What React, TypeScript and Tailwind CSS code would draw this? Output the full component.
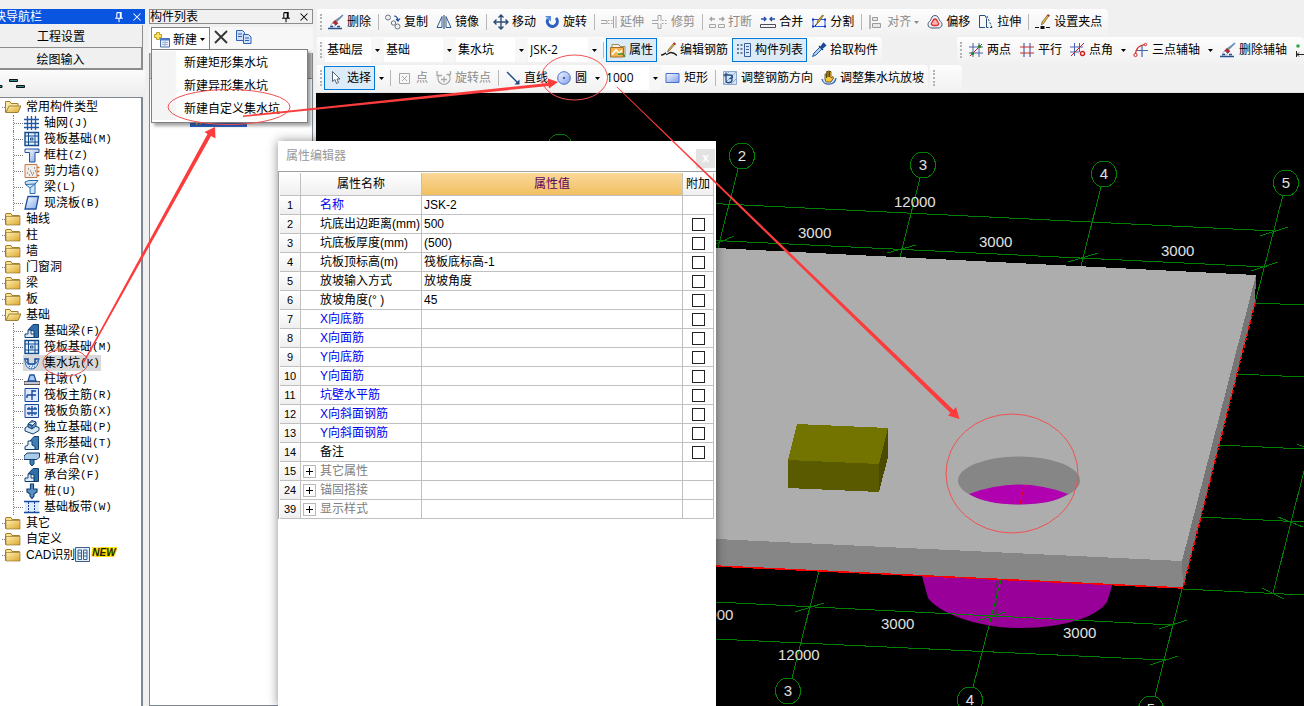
import React from 'react';

const ICONS: Record<string, React.ReactNode> = {
  brush: (
    <>
      <path d="M14.5 1.5 8 8.5l-1.5-1.5z" fill="#f0d9a0" stroke="#8a6a20" strokeWidth="0.8" />
      <path d="m15 1-6.5 6" stroke="#5b8fd0" strokeWidth="1.6" />
      <path d="M4.5 9 7 6.5l2.8 2.8L7 12z" fill="#c02535" stroke="#5a1a3a" strokeWidth="0.7" />
      <path d="M3 10.500 5 9l2.500 2.500L5.500 13z" fill="#fff" stroke="#8899b0" strokeWidth="0.7" />
      <path d="M0 14.500h14M2 12.500h3M9 12.500h3" stroke="#26538f" strokeWidth="1.6" />
    </>
  ),
  copyObj: (
    <g fill="#f3f3f3" stroke="#6c7684">
      <circle cx="3" cy="3.500" r="2.500" />
      <circle cx="8.500" cy="9" r="2.200" />
      <circle cx="12.500" cy="12.500" r="2.500" />
      <path d="M9 2c2 0 3.500 1 4 4m-2-1 2 2 2-2.500" fill="none" stroke="#1f4fa0" strokeWidth="1.200" />
    </g>
  ),
  mirror: (
    <g fill="none" stroke="#2a5a9a">
      <path d="M6 2.500v11H1zM10 2.500v11h5z" />
      <path d="M8 1v14" stroke="#30343c" />
    </g>
  ),
  move: (
    <path d="M8 1v14M1 8h14M5.500 3.500 8 1l2.500 2.500M5.500 12.500 8 15l2.500-2.500M3.500 5.500 1 8l2.500 2.500M12.500 5.500 15 8l-2.500 2.500" fill="none" stroke="#2b4d78" strokeWidth="1.400" />
  ),
  rotate: (
    <>
      <path d="M12 4a5 5 0 1 1-8 1" fill="none" stroke="#2b5fc0" strokeWidth="3" />
      <path d="M1 2h6v5.500z" fill="#5b8be0" />
    </>
  ),
  extend: (
    <g fill="none" stroke="#a4a4a4">
      <path d="M0 6.500h6v3H0M12.500 2v12M15 2v12" />
      <path d="M7 6.500h5M7 9.500h5" strokeDasharray="1.500 1.500" />
    </g>
  ),
  trim: (
    <g fill="none" stroke="#a4a4a4">
      <path d="M0 6.500h6v-5h3v5M0 9.500h6v5h3v-5" />
      <path d="M10 6.500h5M10 9.500h5" strokeDasharray="1.500 1.500" />
    </g>
  ),
  break: (
    <g fill="none" stroke="#a4a4a4">
      <path d="M.5 10.500h6v3h-6zM9.500 10.500h6v3h-6z" />
      <path d="M1 5h5M3 3 1 5l2 2M15 5h-5M13 3l2 2-2 2" strokeWidth="1.300" />
    </g>
  ),
  merge: (
    <g fill="none" stroke="#4a5058">
      <path d="M.5 10.500h15v3H.5z" />
      <path d="M1 5h5M4 3l2 2-2 2M15 5h-5M12 3l-2 2 2 2" stroke="#1f4fa8" strokeWidth="1.400" />
    </g>
  ),
  split: (
    <>
      <path d="M2 5.500h12v7H2z" fill="none" stroke="#2458d8" />
      <path d="M1 4.500h2v2H1zM13 4.500h2v2h-2zM1 11.500h2v2H1zM13 11.500h2v2h-2z" fill="#1038c8" />
      <path d="M12.500 1.500 8 8l-2 1.500.5-2.500 5-6z" fill="#e8b83c" stroke="#604818" strokeWidth="0.7" />
      <path d="M6 9.500 4 12" stroke="#111" />
    </>
  ),
  align: (
    <g fill="#e6e6e6" stroke="#9c9c9c">
      <path d="M2 1v14" strokeWidth="1.400" />
      <path d="M4.500 3.500h5v3h-5zM4.500 9.500h8v4h-8z" />
    </g>
  ),
  offset: (
    <g fill="none">
      <path d="M8 1.500c3 0 3.500 2.500 4.500 5 1.500 1 2.500 2.500 2.500 4 0 2.500-2 3.500-4 3.500H5c-2 0-4-1-4-3.500 0-1.500 1-3 2.500-4C4.500 4 5 1.500 8 1.500z" stroke="#3f5876" fill="#eef2f7" />
      <path d="M8 5c2 0 2 2 3 3.500 1.500 1 .5 3-1.500 3h-3c-2 0-3-2-1.500-3C6 7 6 5 8 5z" stroke="#e03030" strokeWidth="1.300" fill="#f7b5b5" />
    </g>
  ),
  stretch: (
    <g fill="none" stroke="#23507f">
      <path d="M7 13.500H1.500v-12H7l1.500 3v9" />
      <path d="M9 2l5 11.500M5 13.500h10" strokeDasharray="2 1.500" />
    </g>
  ),
  grips: (
    <>
      <path d="M0 13.500h4M11 13.500h4" stroke="#111" strokeWidth="1.200" />
      <path d="M5.500 12h4v3h-4z" fill="#111" />
      <path d="M14 1.500 9 9l-2.500 2L7 8l5.500-7z" fill="#e6bd52" stroke="#6a5018" strokeWidth="0.7" />
      <path d="m12.500 1 2 1" stroke="#b02c2c" strokeWidth="1.600" />
    </>
  ),
  property: (
    <>
      <path d="M2 2.500h7l1 2h5v9H2z" fill="#f5f0e0" stroke="#9c8a60" />
      <path d="M.5 5.500h13v9.500H.5z" fill="#f6b552" stroke="#a0702a" />
      <path d="M2 12.500 6 8l3 3 3-2.500" fill="none" stroke="#fff" strokeWidth="1.600" />
      <path d="M8 12h5l2 3" stroke="#4a8a2a" fill="none" strokeWidth="1.400" />
    </>
  ),
  editBar: (
    <>
      <path d="M0 13c3 0 4-2 5-2M5 12.500c2 0 3-2 5-2 3 0 4 1 6 3" fill="none" stroke="#202020" strokeWidth="1.400" />
      <path d="M14 2 9 8 6.500 10 7.500 7.500l5-6z" fill="#e6bd52" stroke="#6a4a18" strokeWidth="0.7" />
      <path d="m12.500 1 2 1.500" stroke="#b02c2c" strokeWidth="1.800" />
    </>
  ),
  list: (
    <>
      <path d="M1 2h2v2H1zM1 6h2v2H1zM1 10h2v2H1zM4.500 2h2v2h-2zM4.500 6h2v2h-2zM4.500 10h2v2h-2z" fill="#6d7f98" />
      <path d="M8.500 1.500h6v13h-6z" fill="#dce8fb" stroke="#3a5f9c" />
      <path d="M10 4.500h3M10 7.500h3M10 10.500h3" stroke="#3a5f9c" />
    </>
  ),
  picker: (
    <>
      <path d="M9 5 3 11l-1.500 3.500L5 13l6-6z" fill="#a9d0f5" stroke="#2a5c9a" />
      <path d="M8 4l4 4M10 5l2.500-3.500 2 2L11 6.500z" fill="#1c4c92" stroke="#1c4c92" strokeWidth="1.500" />
    </>
  ),
  cursor: <path d="M4.500 1.500v10l2.500-2 1.500 4 2-1-1.500-3.500h3z" fill="#fff" stroke="#44546a" strokeWidth="0.9" />,
  point: (
    <g fill="none" stroke="#a8a8a8">
      <path d="M2.500 3.500h10v10h-10z" />
      <path d="m5 6 5 5M10 6l-5 5" />
    </g>
  ),
  rotatePoint: (
    <g fill="none" stroke="#a8a8a8" strokeWidth="1.300">
      <path d="M3 5a6 6 0 1 0 10 0M1 1v4.500h5M5 9.500h6M8 6.500v6M10.500 4.500h4V1" />
    </g>
  ),
  line: (
    <>
      <path d="m2 2 11 11" stroke="#1a4a86" strokeWidth="1.300" />
      <path d="M14.500 14.500H9.500L14.500 9.500z" fill="#1a4a86" />
    </>
  ),
  circle: (
    <>
      <circle cx="8" cy="8" r="6.300" fill="url(#ball)" stroke="#4a6ecc" />
      <circle cx="8" cy="8" r="1" fill="#24408c" />
    </>
  ),
  rect: <path d="M1 3.500h13v9H1z" fill="url(#ball)" stroke="#4a6ecc" />,
  barDir: (
    <g fill="none" stroke="#234a80">
      <path d="M1.500 1.500h13v13h-13z" fill="#d5e4f6" stroke="#8fa9cc" />
      <path d="m2 14 12-12M9 14l5-5M2 7l5-5" stroke="#8fa9cc" />
      <path d="M4 2.500v8c0 3 5 3 6 0V6M1.500 5h6c4 0 4 3.500 0 3.500" strokeWidth="1.300" />
    </g>
  ),
  slope: (
    <>
      <path d="M1 9c1 7 13 7 14-1" fill="#cfe3fa" stroke="#2f66b4" strokeWidth="1.300" />
      <path d="M4 9V4h1.500v4V1.500H7V7 1h1.500v6V1.500H10V8l2-1.500.5 1.500L10 12H5z" fill="#f7c63c" stroke="#5a430c" strokeWidth="0.800" />
    </>
  ),
  twoPoint: (
    <>
      <path d="M5 1v14M11 1v14M1 5h14M1 11h14" stroke="#4a62b0" />
      <path d="M2 14 14 2" stroke="#c02020" />
      <circle cx="4.500" cy="11.500" r="1.700" fill="#2c8a2c" />
      <circle cx="11.500" cy="4.500" r="1.700" fill="#2c8a2c" />
    </>
  ),
  parallel: (
    <>
      <path d="M5 1v14M11 1v14" stroke="#4a62b0" strokeWidth="1.200" />
      <path d="M1 5h14M1 11h14" stroke="#c83030" strokeWidth="1.200" />
    </>
  ),
  angle: (
    <>
      <path d="M4.500 1v13M9.500 1v9M0 5h13M0 10h9" stroke="#4a62b0" />
      <path d="M1 14 14 1" stroke="#c02020" />
      <circle cx="12.500" cy="11.500" r="2" fill="none" stroke="#d02020" strokeWidth="1.400" />
    </>
  ),
  threePoint: (
    <>
      <path d="M9 4v11M4 8.500h11" stroke="#3f66b4" strokeWidth="1.200" />
      <path d="M2.500 13C2.500 6 6 3 13 2.500" fill="none" stroke="#d02828" strokeWidth="1.200" />
      <circle cx="2.500" cy="13" r="1.600" fill="#fff" stroke="#d02828" />
      <circle cx="12.500" cy="2.500" r="1.200" fill="#fff" stroke="#d02828" />
    </>
  ),
  dimension: (
    <>
      <path d="M1.500 9v6M1.500 12.500H16M4 10.500l-2 2 2 2" stroke="#222" fill="none" />
      <circle cx="3" cy="4" r="1.800" fill="#2fa84a" />
    </>
  ),
  create: (
    <>
      <path d="M6.500 6.500h9v8.500h-9z" fill="#eef4fd" stroke="#4a6ea8" />
      <path d="M6.500 6.500h9v2h-9z" fill="#4a7bd0" />
      <path d="M8 10.500h6M8 12.500h6M11 9v5.500" stroke="#9ab4dc" />
      <path d="M2.500.5h3v2h2v3h-2v2h-3v-2h-2v-3h2z" fill="#ffe45a" stroke="#a88a10" strokeWidth="0.800" />
    </>
  ),
  remove: <path d="m2 2 12 12M14 2 2 14" stroke="#333" strokeWidth="1.800" />,
  copy: (
    <g fill="#cfe0fa" stroke="#2f5fb0">
      <path d="M.5 1.500h6l2 2v8h-8z" />
      <path d="M7.500 5.500h5l2.500 2.500v6.500H7.500z" />
      <path d="M2 5h4M2 7.500h4M9 9h4M9 11.500h4" />
    </g>
  ),
  folder: (
    <>
      <path d="M.5 3V13.500h14V4.500H7L6 2.500H1z" fill="#f9e08a" stroke="#a08030" />
      <path d="M1 5.500h14v8.500H1z" fill="url(#gold)" stroke="#8a6a20" strokeWidth="0.600" />
    </>
  ),
  folderOpen: (
    <>
      <path d="M.5 13.500v-11H5l1 2h7v3" fill="#fbe7a0" stroke="#a08030" />
      <path d="M1 13.500 4 7h12l-3 6.500z" fill="url(#gold)" stroke="#8a6a20" strokeWidth="0.800" />
    </>
  ),
  axis: <path d="M3.500 1v14M7.500 1v14M11.500 1v14M0 4.500h15M0 8.500h15M0 12.500h15" stroke="#1f58a8" strokeWidth="1.300" />,
  raft: (
    <g fill="none" stroke="#124a8c">
      <path d="M1 1.500h13.500v13H1z" fill="#e8f1fb" strokeWidth="1.400" />
      <path d="M4.500 2v12M11 2v12M1 5h13M1 11h13M6.500 7h2.500v2H6.500z" />
    </g>
  ),
  column: <path d="M1 2h14v3.500h-4V15H5.500V5.500H1z" fill="url(#steel)" stroke="#1f4fa0" />,
  wall: (
    <>
      <path d="M1 1.500h12v13H1z" fill="#f1ece8" stroke="#c87a48" />
      <path d="M3 10h1M6 8h1M9 10h1M5 12h1M8 12h1M11 8h1M4 6h1M10 5h1M7 10h1" stroke="#555" />
      <path d="M13 4.500h2.500M13 8.500h2.500M13 12.500h2.500" stroke="#d86a18" strokeWidth="1.300" />
    </>
  ),
  beam: <path d="M1 3l4-1.500h9L11 5v9.500H6V9L1.500 5.500zM6 9l6-5M1.500 5.500 11 5" fill="#cfe4f8" stroke="#2b70b0" />,
  slab: <path d="M4 1.500h10.500L12 14H1z" fill="url(#steel)" stroke="#1f4fa0" strokeWidth="1.300" />,
  footBeam: (
    <>
      <path d="M4 7 9 1.500h5.500v13H10V8z" fill="#2f6ea8" stroke="#123f70" />
      <path d="M1 14.500V11h3V7h3v4h3v3.500z" fill="#dfecf8" stroke="#123f70" />
    </>
  ),
  pit: (
    <>
      <path d="M0 4h4v5h7V4h4.500" fill="none" stroke="#124a9c" strokeWidth="1.500" />
      <path d="M1 5c0 12 13 12 13.500 0L11 9.500H4z" fill="#d8e8fa" stroke="#2f66b4" />
      <path d="M5 11.500h1M8 11h1M10 12h1M7 13h1" stroke="#124a9c" />
    </>
  ),
  pier: (
    <>
      <path d="M0 10.500h16v3H0z" fill="#c4c8ce" stroke="#555" />
      <path d="M4 10 6 4h4l2 6z" fill="#a9c9f5" stroke="#1f4fa0" strokeWidth="1.300" />
    </>
  ),
  mainBar: (
    <g fill="none" stroke="#1648a0">
      <path d="M1 1.500h13.500v13H1z" fill="#dfeaff" />
      <path d="M8 3v10M3 8h9M8 4h4M3 8v3" strokeWidth="1.400" />
    </g>
  ),
  negBar: (
    <g fill="none" stroke="#1648a0">
      <path d="M1 1.500h13.500v13H1z" fill="#dfeaff" />
      <path d="M8 3v10M3 6h10M3 10h10M5 6v-2M11 6v-2M5 12v-2M11 12v-2" strokeWidth="1.300" />
    </g>
  ),
  footing: (
    <>
      <path d="M1 9l5-3.500 9 3v3L9 15l-8-3z" fill="#d8e8f7" stroke="#123f70" />
      <path d="M4 5l4-3.500 4 1.500v4L8 10 4 8zM4 5l4 2 4-4M8 7v3" fill="#6fa2d0" stroke="#123f70" />
    </>
  ),
  strip: (
    <>
      <path d="M6 6l4-4.500h4.500v13H10z" fill="#3f7db4" stroke="#123f70" />
      <path d="M1 14.500v-3L4 10V6h4v4l3 1.500v3z" fill="#e4eff9" stroke="#123f70" />
    </>
  ),
  cap: (
    <>
      <path d="M0 5l3-3h12.500v4L13 8.500H0z" fill="#a9cbe8" stroke="#123f70" />
      <path d="M6 8.500h4V13l-2 2-2-2z" fill="#3f7db4" stroke="#123f70" />
    </>
  ),
  pile: <path d="M6.500 1h3v5h3.500v3l-3 2v2L8 15.500 6 13v-2L3 9V6h3.500z" fill="#5b90c4" stroke="#123f70" strokeWidth="1.200" />,
  band: (
    <>
      <path d="M1 3h14v10H1z" fill="#dfeaff" />
      <path d="M0 2.500h15.500M0 13.500h15.500" stroke="#1648a0" strokeWidth="1.400" />
      <path d="M4.500 3v10M10.500 3v10" stroke="#1648a0" strokeDasharray="2 1" />
    </>
  ),
  cad: <path d="M.5.5h14v14H.5zM3 3h3.500v9.500H3zM8.500 3H12v9.500H8.500zM3 6h3.500M8.500 6H12M3 9h3.500M8.500 9H12" fill="#e4f0fb" stroke="#3f5f86" />,
  gear: <circle cx="8" cy="8" r="4.500" fill="none" stroke="#e0a030" strokeWidth="3" strokeDasharray="2 1.500" />,
  pin: <path d="M5.500 3h5v6M5.500 3v6M9.500 3v6M3.500 9.500h9M8 10v4" fill="none" stroke="currentColor" strokeWidth="1.200" />,
  close: <path d="m4 4 8 8M12 4l-8 8" stroke="currentColor" strokeWidth="1.200" />,
};

const Icon: React.FC<{ name: string; className?: string }> = ({ name, className = 'size-4' }) => (
  <svg viewBox="0 0 16 16" className={`shrink-0 ${className}`} aria-hidden="true">
    {ICONS[name]}
  </svg>
);

const Arrow: React.FC = () => (
  <svg viewBox="0 0 5 3" className="w-[5px] h-[3px] shrink-0" aria-hidden="true">
    <path d="M0 0h5L2.500 3z" fill="currentColor" />
  </svg>
);

interface ToolProps {
  icon: string;
  label: string;
  active?: boolean;
  disabled?: boolean;
  menu?: boolean;
}

const Tool: React.FC<ToolProps> = ({ icon, label, active, disabled, menu }) => (
  <button
    disabled={disabled}
    className={`h-6 shrink-0 flex items-center gap-[3px] px-1 whitespace-nowrap ${
      active ? 'bg-[#dcebf8] outline outline-1 -outline-offset-1 outline-[#0078d7]' : 'hover:bg-[#e5f1fb]'
    } ${disabled ? 'text-[#8c8c8c]' : ''}`}
  >
    <Icon name={icon} />
    <span>{label}</span>
    {menu && <Arrow />}
  </button>
);

const DropArrow: React.FC<{ label: string }> = ({ label }) => (
  <button aria-label={label} className="w-3 h-6 shrink-0 flex items-center justify-center">
    <Arrow />
  </button>
);

const Sep: React.FC = () => (
  <span className="w-[6px] h-4 shrink-0 flex justify-center">
    <span className="w-px bg-[#b8b8b8]" />
  </span>
);

const Grip: React.FC = () => (
  <span className="w-[7px] h-4 shrink-0 pl-[3px] flex">
    <span className="border-l-2 border-dotted border-[#b4b4b4]" />
  </span>
);

const Combo: React.FC<{ label: string; value: string; width: string }> = ({ label, value, width }) => (
  <span className={`relative h-6 shrink-0 ml-px flex bg-white ${width}`}>
    <select aria-label={label} defaultValue={value} className="w-full h-6 appearance-none bg-transparent pl-[2px] pr-3 outline-none">
      <option>{value}</option>
    </select>
    <span className="absolute inset-y-0 right-0 w-3 flex items-center justify-center bg-[#f7f7f7] pointer-events-none">
      <Arrow />
    </span>
  </span>
);

const Strip: React.FC<{ children: React.ReactNode; className?: string }> = ({ children, className = '' }) => (
  <div className={`h-[27px] shrink-0 flex items-center rounded-r bg-linear-to-b from-[#fdfdfd] to-[#f1f1f1] ${className}`}>{children}</div>
);

const Toolbars: React.FC = () => (
  <div className="pt-2 pl-px border-b border-[#e3e3e3] overflow-hidden" style={{ fontFamily: '"Open Sans","Noto Sans CJK SC",sans-serif' }}>
    <div className="h-7 flex items-center">
      <Strip className="pr-[2px]">
        <Grip />
        <Tool icon="brush" label="删除" />
        <Sep />
        <Tool icon="copyObj" label="复制" />
        <Tool icon="mirror" label="镜像" />
        <Sep />
        <Tool icon="move" label="移动" />
        <Tool icon="rotate" label="旋转" />
        <Sep />
        <Tool icon="extend" label="延伸" disabled />
        <Tool icon="trim" label="修剪" disabled />
        <Sep />
        <Tool icon="break" label="打断" disabled />
        <Tool icon="merge" label="合并" />
        <Tool icon="split" label="分割" />
        <Sep />
        <Tool icon="align" label="对齐" disabled menu />
        <Tool icon="offset" label="偏移" />
        <Tool icon="stretch" label="拉伸" />
        <Sep />
        <Tool icon="grips" label="设置夹点" />
      </Strip>
    </div>
    <div className="h-7 flex items-center justify-between">
      <Strip>
        <Grip />
        <Combo label="楼层" value="基础层" width="w-[58px]" />
        <Combo label="构件类别" value="基础" width="w-[71px]" />
        <Combo label="构件类型" value="集水坑" width="w-[71px]" />
        <Combo label="构件" value="JSK-2" width="w-[72px]" />
        <Sep />
        <Tool icon="property" label="属性" active />
        <Tool icon="editBar" label="编辑钢筋" />
        <Tool icon="list" label="构件列表" active />
        <Tool icon="picker" label="拾取构件" />
      </Strip>
      <Strip className="w-[347px] overflow-hidden">
        <Grip />
        <Tool icon="twoPoint" label="两点" />
        <Tool icon="parallel" label="平行" />
        <Tool icon="angle" label="点角" />
        <DropArrow label="点角选项" />
        <Tool icon="threePoint" label="三点辅轴" />
        <DropArrow label="三点辅轴选项" />
        <Tool icon="brush" label="删除辅轴" />
        <Tool icon="dimension" label="" />
      </Strip>
    </div>
    <div className="h-7 flex items-center">
      <Strip className="mr-[2px]">
        <Grip />
        <Tool icon="cursor" label="选择" active />
        <DropArrow label="选择选项" />
        <Sep />
        <Tool icon="point" label="点" disabled />
        <Tool icon="rotatePoint" label="旋转点" disabled />
        <Sep />
        <Tool icon="line" label="直线" />
        <Tool icon="circle" label="圆" />
        <DropArrow label="圆选项" />
        <Combo label="半径" value="1000" width="w-[57px]" />
        <Tool icon="rect" label="矩形" />
        <Sep />
        <Tool icon="barDir" label="调整钢筋方向" />
        <Tool icon="slope" label="调整集水坑放坡" />
      </Strip>
      <Strip className="w-8">
        <Grip />
      </Strip>
    </div>
  </div>
);

interface TreeItem {
  icon: string;
  label: string;
  hotkey: string;
}

interface TreeGroup {
  label: string;
  items?: TreeItem[];
  isNew?: boolean;
}

const TREE: TreeGroup[] = [
  {
    label: '常用构件类型',
    items: [
      { icon: 'axis', label: '轴网', hotkey: 'J' },
      { icon: 'raft', label: '筏板基础', hotkey: 'M' },
      { icon: 'column', label: '框柱', hotkey: 'Z' },
      { icon: 'wall', label: '剪力墙', hotkey: 'Q' },
      { icon: 'beam', label: '梁', hotkey: 'L' },
      { icon: 'slab', label: '现浇板', hotkey: 'B' },
    ],
  },
  { label: '轴线' },
  { label: '柱' },
  { label: '墙' },
  { label: '门窗洞' },
  { label: '梁' },
  { label: '板' },
  {
    label: '基础',
    items: [
      { icon: 'footBeam', label: '基础梁', hotkey: 'F' },
      { icon: 'raft', label: '筏板基础', hotkey: 'M' },
      { icon: 'pit', label: '集水坑', hotkey: 'K' },
      { icon: 'pier', label: '柱墩', hotkey: 'Y' },
      { icon: 'mainBar', label: '筏板主筋', hotkey: 'R' },
      { icon: 'negBar', label: '筏板负筋', hotkey: 'X' },
      { icon: 'footing', label: '独立基础', hotkey: 'P' },
      { icon: 'strip', label: '条形基础', hotkey: 'T' },
      { icon: 'cap', label: '桩承台', hotkey: 'V' },
      { icon: 'footBeam', label: '承台梁', hotkey: 'F' },
      { icon: 'pile', label: '桩', hotkey: 'U' },
      { icon: 'band', label: '基础板带', hotkey: 'W' },
    ],
  },
  { label: '其它' },
  { label: '自定义' },
  { label: 'CAD识别', isNew: true },
];

const NavPanel: React.FC = () => (
  // the panel is docked partly beyond the window's left edge
  <aside className="w-[165px] -ml-5 shrink-0 pt-[9px] flex flex-col">
    <div className="h-[15px] shrink-0 flex items-center bg-[#0a55e0] text-white pl-[2px] pr-[1px]">
      <h2 className="flex-1">模块导航栏</h2>
      <Icon name="pin" className="size-[14px] mr-1" />
      <Icon name="close" className="size-[14px]" />
    </div>
    <button className="h-[23px] mt-px mr-[2px] pt-[2px] shrink-0 bg-[#f0f0f0] border-b border-r border-[#8c8c8c]">工程设置</button>
    <button className="h-[22px] mr-[2px] pt-[3px] shrink-0 bg-[#f0f0f0] border-b-2 border-r-2 border-[#8c8c8c]">绘图输入</button>
    <div className="h-[27px] shrink-0 pl-5 bg-linear-to-b from-[#fcfcfc] to-[#ececec]">
      <svg viewBox="0 0 28 27" className="w-7 h-[27px]" aria-hidden="true">
        <path d="M9.500 9.500h8v2h-8zM16.500 15.500h8v2h-8zM-2 15.500h4v2h-4z" fill="#2c8f8c" stroke="#0a1414" />
      </svg>
    </div>
    <ul className="flex-1 min-h-0 mr-[2px] pl-5 pt-px bg-white border-t border-r-2 border-[#7f8790] leading-4 whitespace-nowrap">
      {TREE.map((group) => (
        <li key={group.label}>
          <div className="h-4 flex items-center pl-[2px]">
            <span className="w-[3px] border-t border-dotted border-[#808080]" />
            <Icon name={group.items ? 'folderOpen' : 'folder'} />
            <span className="ml-[5px]">{group.label}</span>
            {group.isNew && (
              <>
                <Icon name="cad" />
                <span className="px-px self-start leading-3 text-[10px] font-bold italic text-[#202000] [text-shadow:0_0_1px_#ffe000,1px_1px_0_#ffe000,-1px_-1px_0_#ffe000,1px_-1px_0_#ffe000,-1px_1px_0_#ffe000]">NEW</span>
              </>
            )}
          </div>
          {group.items && (
            <ul className="ml-[13px]">
              {group.items.map((item) => (
                <li key={item.label} className="h-4 flex items-center border-l border-dotted border-[#808080]">
                  <span className="w-[9px] border-t border-dotted border-[#808080]" />
                  <span className={`h-4 flex items-center gap-1 pl-px pr-px ${item.hotkey === 'K' ? 'bg-[#d8d8d8]' : ''}`}>
                    <Icon name={item.icon} />
                    <span className="flex items-center">
                      {item.label}
                      <span className="font-['Liberation_Mono'] text-[11px]">({item.hotkey})</span>
                    </span>
                  </span>
                </li>
              ))}
            </ul>
          )}
        </li>
      ))}
    </ul>
  </aside>
);

const NEW_MENU = ['新建矩形集水坑', '新建异形集水坑', '新建自定义集水坑'];

const ComponentPanel: React.FC = () => (
  <aside className="w-[164px] ml-1 mr-[3px] shrink-0 pt-[9px] flex flex-col">
    <div className="h-[15px] shrink-0 flex items-center border border-[#8c8c8c] pr-px">
      <h2 className="flex-1">构件列表</h2>
      <Icon name="pin" className="size-[14px] mr-1" />
      <Icon name="close" className="size-[14px]" />
    </div>
    <div className="relative h-[26px] mt-[3px] shrink-0 flex items-start bg-[#f7f7f7] pl-[2px]">
      <button className="w-[59px] h-6 flex items-center gap-[3px] pl-[2px] bg-white border border-b-0 border-[#808080]">
        <Icon name="create" />
        <span>新建</span>
        <Arrow />
      </button>
      <button aria-label="删除" className="ml-[3px] h-5 flex items-center">
        <Icon name="remove" />
      </button>
      <button aria-label="复制" className="ml-[7px] h-5 flex items-center">
        <Icon name="copy" />
      </button>
      <div className="absolute z-10 left-[2px] top-[22px] w-[157px] h-[74px] py-px bg-white border border-[#808080] shadow-[3px_3px_3px_rgba(0,0,0,0.35)]">
        {NEW_MENU.map((label) => (
          <button key={label} className="w-full h-[23px] flex items-center whitespace-nowrap bg-linear-to-r from-[#f4f4f4] from-15% to-white to-16% pl-8 hover:bg-[#e5f1fb]">
            {label}
          </button>
        ))}
      </div>
    </div>
    <div className="h-[25px] shrink-0 bg-[#c9c9c9] border-x border-[#8c8c8c]" />
    <div className="flex-1 min-h-0 bg-white border border-[#7f8790] pt-8">
      <div className="w-[57px] h-4 ml-10 flex items-center bg-[#3066c8] text-white">
        <Icon name="gear" />
        <span className="ml-1">JSK-2</span>
      </div>
    </div>
  </aside>
);

interface PropertyRow {
  no: number;
  name: string;
  value?: string;
  kind?: 'key' | 'group';
}

const PROPERTIES: PropertyRow[] = [
  { no: 1, name: '名称', value: 'JSK-2', kind: 'key' },
  { no: 2, name: '坑底出边距离(mm)', value: '500' },
  { no: 3, name: '坑底板厚度(mm)', value: '(500)' },
  { no: 4, name: '坑板顶标高(m)', value: '筏板底标高-1' },
  { no: 5, name: '放坡输入方式', value: '放坡角度' },
  { no: 6, name: '放坡角度(° )', value: '45' },
  { no: 7, name: 'X向底筋', kind: 'key' },
  { no: 8, name: 'X向面筋', kind: 'key' },
  { no: 9, name: 'Y向底筋', kind: 'key' },
  { no: 10, name: 'Y向面筋', kind: 'key' },
  { no: 11, name: '坑壁水平筋', kind: 'key' },
  { no: 12, name: 'X向斜面钢筋', kind: 'key' },
  { no: 13, name: 'Y向斜面钢筋', kind: 'key' },
  { no: 14, name: '备注' },
  { no: 15, name: '其它属性', kind: 'group' },
  { no: 24, name: '锚固搭接', kind: 'group' },
  { no: 39, name: '显示样式', kind: 'group' },
];

const CELL = 'border-r border-b border-[#c0c0c0] p-0';

const PropertyWindow: React.FC = () => (
  <section className="absolute left-[278px] top-[141px] bottom-0 w-[438px] bg-white shadow-[0_0_10px_rgba(0,0,0,0.45)]">
    <div className="h-[30px] flex items-center justify-between pl-2 text-[#999]">
      <h2>属性编辑器</h2>
      <button aria-label="关闭" className="w-[19px] h-[19px] mr-px mt-1 bg-[#e3e3e3] text-white font-bold leading-4">x</button>
    </div>
    <div className="border-t border-l border-[#a0a0a0] pt-px pl-px">
      <table className="table-fixed w-[434px] border-separate border-spacing-0 whitespace-nowrap leading-4">
        <colgroup>
          <col className="w-[21px]" />
          <col className="w-[121px]" />
          <col />
          <col className="w-[31px]" />
        </colgroup>
        <thead>
          <tr className="h-[23px]">
            <th className={`${CELL} bg-linear-to-b from-white to-[#efefef]`} />
            <th className={`${CELL} font-normal bg-linear-to-b from-white to-[#efefef]`}>属性名称</th>
            <th className={`${CELL} font-normal text-[#600060] bg-linear-to-b from-[#fad898] to-[#f1bf60]`}>属性值</th>
            <th className={`${CELL} font-normal bg-linear-to-b from-white to-[#efefef]`}>附加</th>
          </tr>
        </thead>
        <tbody>
          {PROPERTIES.map((row) => (
            <tr key={row.no} className="h-[19px]">
              <td className={`${CELL} text-center text-[11px] bg-linear-to-b from-white to-[#efefef]`}>{row.no}</td>
              <td className={CELL}>
                <div className={`flex items-center ${row.kind === 'key' ? 'text-[#0000f0]' : row.kind === 'group' ? 'text-[#808080]' : ''}`}>
                  <span className="w-[19px] shrink-0 pl-[2px] flex">
                    {row.kind === 'group' && (
                      <button aria-label={`展开${row.name}`} className="size-[13px] border border-[#b8b8b8] text-black">
                        <svg viewBox="0 0 11 11" className="size-[11px]" aria-hidden="true">
                          <path d="M2 5.500h7M5.500 2v7" stroke="currentColor" />
                        </svg>
                      </button>
                    )}
                  </span>
                  <span>{row.name}</span>
                </div>
              </td>
              <td className={`${CELL} pl-[2px]`}>{row.value}</td>
              <td className={CELL}>
                {row.no > 1 && row.kind !== 'group' && (
                  <input type="checkbox" aria-label={`附加 ${row.name}`} className="block mx-auto size-[13px] appearance-none bg-white border border-[#222] checked:bg-[#222]" />
                )}
              </td>
            </tr>
          ))}
        </tbody>
      </table>
    </div>
  </section>
);

const GRID_LINES = [
  // dimension lines behind and in front of the slab
  'M560 196 1274 231M560 233 1267 267M716 602 1173 625M716 639 1164 660',
  // numbered axes
  'M738 169 718 248M920 178 900 257M1101 187 1081 266M1283 195 1255 303',
  'M819 571 792 678M1001 580 973 687M1182 589 1155 696',
  // lettered axes on the right
  'M1255 303 1304 305M1237 374 1304 377M1219 445 1304 449M1200 517 1304 522M1183 589 1304 595M1304 471 1273 593',
  // ticks
  'M1260 236 1288 227M887 253 916 245M1068 262 1098 253M1251 271 1278 262M704 249 734 236',
  'M795 612 824 603M977 621 1005 612M1159 629 1187 620M1150 665 1178 656M1278 517 1303 527M1262 588 1284 599M1297 444 1304 447',
].join('');

const AXIS_HEADS = [
  { x: 560, y: 147, n: 1 },
  { x: 742, y: 156, n: 2 },
  { x: 923, y: 165, n: 3 },
  { x: 1104, y: 174, n: 4 },
  { x: 1286, y: 183, n: 5 },
  { x: 788, y: 691, n: 3 },
  { x: 970, y: 700, n: 4 },
  { x: 1151, y: 709, n: 5 },
];

const DIMENSIONS = [
  { x: 894, y: 207, text: '12000' },
  { x: 798, y: 238, text: '3000' },
  { x: 979, y: 247, text: '3000' },
  { x: 1161, y: 256, text: '3000' },
  { x: 700, y: 620, text: '3000' },
  { x: 881, y: 629, text: '3000' },
  { x: 1063, y: 638, text: '3000' },
  { x: 778, y: 660, text: '12000' },
];

const Viewport3D: React.FC = () => (
  <div className="flex-1 min-h-0 bg-black overflow-hidden">
    <svg viewBox="316 93 988 613" className="w-[988px] h-[613px] max-w-none" role="img" aria-label="三维视图" fontFamily="Liberation Sans, sans-serif">
      <path d="M922 576 928 598C938 612 975 628 1020 628S1098 616 1107 602L1112 586V570H922z" fill="#990099" />
      <path d={GRID_LINES} fill="none" stroke="#008000" shapeRendering="crispEdges" />
      <path d="M996 582v38" stroke="#006000" strokeDasharray="5 4" />
      <g shapeRendering="crispEdges">
        <path d="M716 248 1256 275 1182 561 716 539z" fill="#adadad" />
        <path d="M716 539 1182 561 1183 588 716 566z" fill="#868686" />
        <path d="M1256 275 1255 303 1183 588 1182 561z" fill="#757575" />
        <path d="M716 566 1183 588" stroke="#ff0000" strokeWidth="1.500" />
        <path d="M1255 303 1183 588" stroke="#ff0000" strokeWidth="1.500" strokeDasharray="4 2" />

        <path d="M797 424 888 428 879 464 788 460z" fill="#737300" />
        <path d="M788 460 879 464 879 492 788 488z" fill="#5a5a00" />
        <path d="M888 428V457L879 492V464z" fill="#4a4a00" />
      </g>

      <ellipse cx="1019" cy="480.500" rx="61" ry="24" fill="#868686" />
      <path d="M969 494Q1019 475 1068 494Q1052 504.500 1019 504.500T969 494z" fill="#b000b0" />
      <path d="m1024 485-4 20" stroke="#ff0000" strokeDasharray="5 2" />

      {AXIS_HEADS.map(({ x, y, n }) => (
        <g key={`${x}-${n}`}>
          <ellipse cx={x} cy={y} rx="12.500" ry="13" fill="none" stroke="#008000" shapeRendering="crispEdges" />
          <text x={x} y={y + 5} textAnchor="middle" fontSize="15" fill="#e0e0e0">
            {n}
          </text>
        </g>
      ))}
      {DIMENSIONS.map(({ x, y, text }) => (
        <text key={`${x}-${y}`} x={x} y={y} fontSize="15" fill="#e0e0e0">
          {text}
        </text>
      ))}
    </svg>
  </div>
);

const GuideMarks: React.FC = () => (
  <svg viewBox="0 0 1304 706" className="absolute z-20 left-0 top-0 w-[1304px] h-[706px] max-w-none pointer-events-none" aria-hidden="true">
    <g fill="none" stroke="#f25050" strokeWidth="1">
      <ellipse cx="65.500" cy="362.500" rx="22.500" ry="13.500" />
      <ellipse cx="229" cy="107" rx="61" ry="17.500" />
      <ellipse cx="574.500" cy="77.500" rx="33" ry="22.500" />
      <ellipse cx="1012" cy="473.500" rx="66" ry="59.500" />
    </g>
    <g fill="#fc3c3c">
      <path d="M83 362 207.500 134 204.500 132 215 127 215.500 138.500 211 136 84 363z" />
      <path d="M243 115.500 548 83 548 78.500 558 82 549 88.500 548.500 86 243 117z" />
      <path d="M617 86.500 953.500 410 956 407 959.500 419 948 415.500 950.500 413 616.500 87z" />
    </g>
  </svg>
);

export default function App() {
  return (
    <div
      className="relative flex h-screen w-full overflow-hidden bg-[#f0f0f0] text-[12px] leading-4 text-black"
      style={{ fontFamily: '"Liberation Sans","Noto Sans CJK SC",sans-serif' }}
    >
      <svg className="absolute size-0" aria-hidden="true">
        <defs>
          <linearGradient id="ball" x1="0" y1="0" x2="1" y2="1">
            <stop offset="0" stopColor="#f4f8ff" />
            <stop offset="1" stopColor="#7fa0ec" />
          </linearGradient>
          <linearGradient id="gold" x1="0" y1="0" x2="1" y2="1">
            <stop offset="0" stopColor="#fff0b0" />
            <stop offset="1" stopColor="#dda52c" />
          </linearGradient>
          <linearGradient id="steel" x1="0" y1="0" x2="1" y2="1">
            <stop offset="0" stopColor="#ffffff" />
            <stop offset="1" stopColor="#7fa8e8" />
          </linearGradient>
        </defs>
      </svg>
      <NavPanel />
      <ComponentPanel />
      <main className="flex-1 min-w-0 flex flex-col">
        <Toolbars />
        <Viewport3D />
      </main>
      <PropertyWindow />
      <GuideMarks />
    </div>
  );
}
